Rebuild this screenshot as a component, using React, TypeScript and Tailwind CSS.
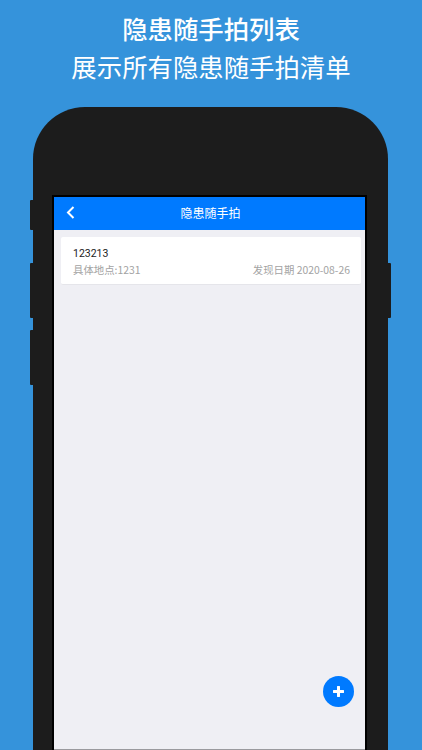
const font = { fontFamily: '"Noto Sans CJK SC", Roboto, sans-serif' };

const SideButton = ({ className }: { className: string }) => (
  <div className={`absolute w-[3px] bg-[#1c1c1c] ${className}`} />
);

export default function App() {
  return (
    <div className="h-[750px] w-[422px] overflow-hidden bg-[#3593db] flex flex-col items-center" style={font}>
      <div className="pt-[9px] h-[107px] shrink-0 text-white text-center">
        <div className="text-[25.4px] leading-[38px] font-medium">隐患随手拍列表</div>
        <div className="text-[25.4px] leading-[38px]">展示所有隐患随手拍清单</div>
      </div>

      <div className="relative w-[355px] h-[643px] ml-[-1px] shrink-0">
        <SideButton className="left-[-3px] top-[93px] h-[30px] rounded-l-[1px]" />
        <SideButton className="left-[-3px] top-[156px] h-[55px] rounded-l-[1px]" />
        <SideButton className="left-[-3px] top-[223px] h-[55px] rounded-l-[1px]" />
        <SideButton className="right-[-3px] top-[156px] h-[55px] rounded-r-[1px]" />

        <div className="h-full bg-[#1c1c1c] rounded-t-[52px] pt-[88px] pl-[19px] pr-[21px]">
          <div className="h-full border-[2px] border-b-0 border-black bg-[#efeff4] flex flex-col">
            <div className="h-[33px] shrink-0 bg-[#007aff] flex items-center relative justify-center pb-[2px] pl-[2px]">
              <svg className="absolute left-[12px] top-[9px]" width="9" height="13" viewBox="0 0 9 13" fill="none">
                <path d="M7.5 1 L2 6.5 L7.5 12" stroke="white" strokeWidth="2" />
              </svg>
              <span className="text-white text-[12px] leading-[16px]">隐患随手拍</span>
            </div>

            <div className="h-[7px] shrink-0" />
            <div className="ml-[7px] mr-[4px] h-[48px] shrink-0 bg-white border-b border-[#e5e5ea] rounded-[2px] pl-[12px] pr-[11px] pt-[8px] flex flex-col">
              <div className="text-[10.5px] leading-[17px] text-[#222]" style={{ fontFamily: "Roboto, sans-serif" }}>123213</div>
              <div className="flex justify-between text-[10.4px] leading-[15px] text-[#a3a3a3]">
                <span>具体地点:1231</span>
                <span>发现日期 2020-08-26</span>
              </div>
            </div>

            <div className="flex-1 flex justify-end items-start pr-[11px] pt-[391px]">
              <div className="w-[31px] h-[31px] rounded-full bg-[#007aff] flex items-center justify-center">
                <svg width="11" height="11" viewBox="0 0 11 11">
                  <path d="M5.5 1 V10 M1 5.5 H10" stroke="white" strokeWidth="3" strokeLinecap="round" />
                </svg>
              </div>
            </div>
            <div className="h-px shrink-0 bg-[#9a9a9e]" />
          </div>
        </div>
      </div>
    </div>
  );
}
